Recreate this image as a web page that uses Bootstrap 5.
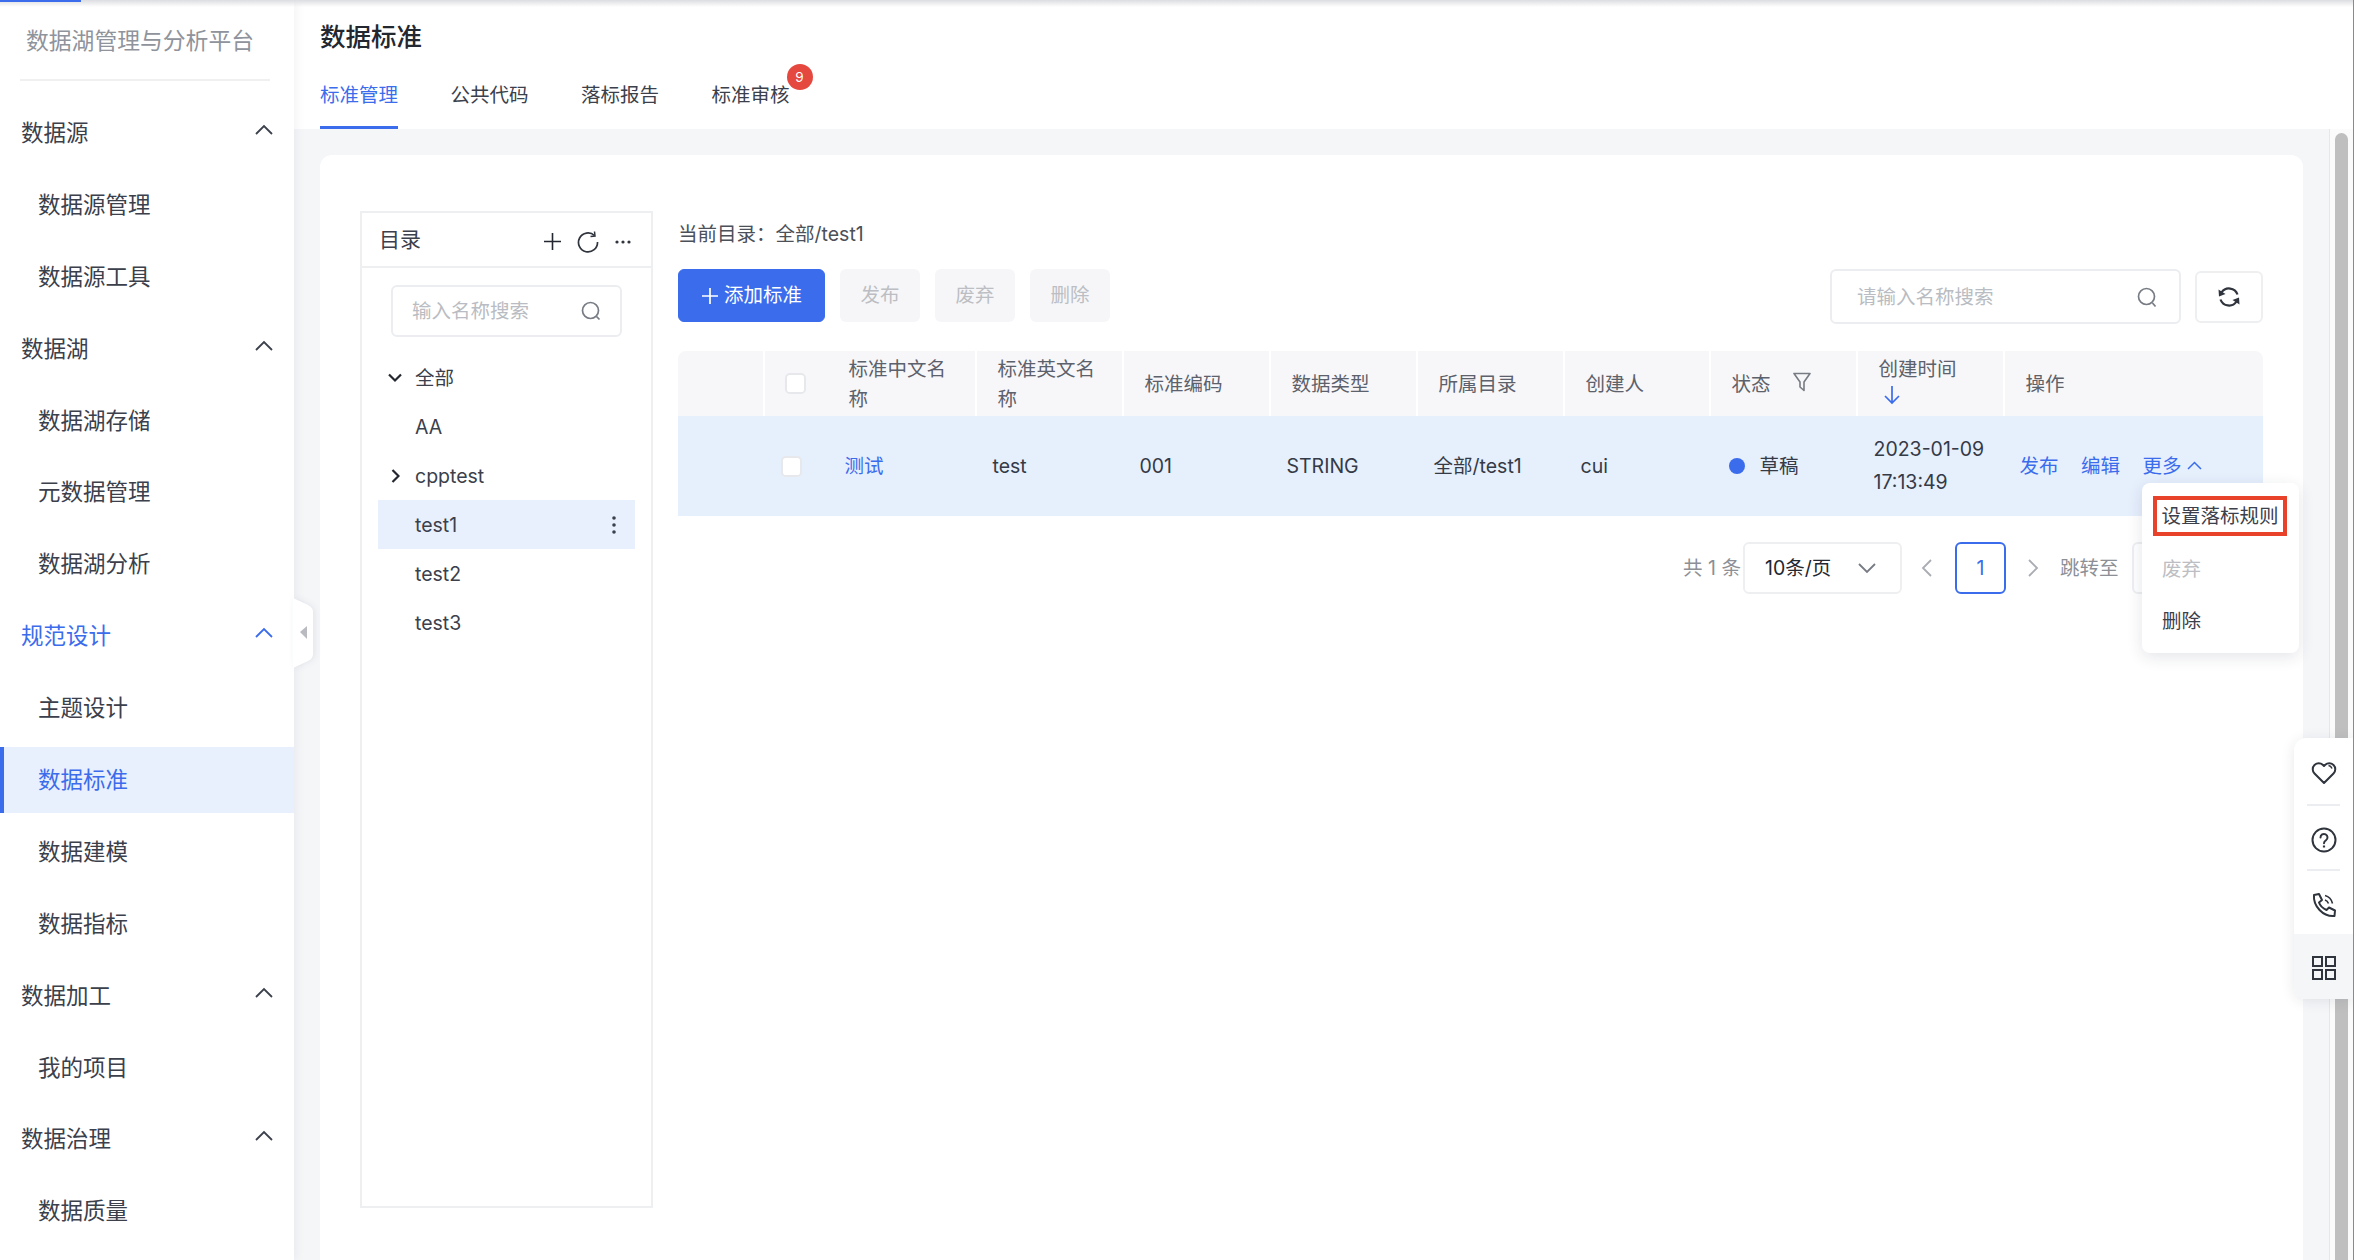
<!DOCTYPE html>
<html lang="zh-CN">
<head>
<meta charset="utf-8">
<title>数据标准</title>
<link rel="stylesheet" href="https://cdn.jsdelivr.net/npm/bootstrap@5.3.0/dist/css/bootstrap.min.css">
<style>
html,body{height:100%;overflow:hidden}
body{font-family:Inter,"Noto Sans CJK SC",sans-serif;font-size:19.5px;line-height:30px;color:#343a46;background:#fff;width:2354px;height:1260px;position:relative}
.load-strip{position:absolute;left:0;top:0;width:100%;height:7px;background:linear-gradient(#dcdde0,rgba(235,236,240,0));z-index:30}
.load-bar{position:absolute;left:0;top:0;width:81px;height:2px;background:#3b6cec;z-index:31}
.edge-line{position:absolute;right:0;top:0;width:1px;height:100%;background:#8a8a8a;z-index:32}
.side-rail{width:294px;height:1260px;flex:none;background:#fff;box-shadow:2px 0 10px rgba(30,40,70,.06);position:relative;z-index:5;overflow:hidden}
.side-logo{margin:0 24px 0 20px;padding-left:6px;height:81px;border-bottom:2px solid #eff0f2;font-size:22.8px;line-height:82px;color:#8f939b;white-space:nowrap}
.side-menu{margin-top:16px}
.side-item{height:71.9px;display:flex;align-items:center;font-size:22.5px;color:#3b404b;padding-left:21px;position:relative}
.side-sub{padding-left:38px;margin-bottom:0}
.side-item svg{position:absolute;left:255px;top:27px}
.side-open{color:#3b6cec}
.side-active{color:#3b6cec;background:#e9f0fd;border-left:4px solid #3b6cec;padding-left:34px;height:66px;margin:3px 0 2.9px}
.collapse-tab{position:absolute;left:293px;top:598px;z-index:6;filter:drop-shadow(2px 0 3px rgba(30,40,70,.08))}
.page-head{height:129px;background:#fff;padding:19px 0 0 26px;position:relative;z-index:2}
.page-title{font-size:25.5px;line-height:36px;font-weight:500;color:#23272f;margin:0 0 6px}
.tab-strip{gap:52.5px}
.tab-strip .nav-link{padding:19px 0 16px;border-bottom:3px solid transparent;color:#3b404b;font-size:19.5px;line-height:30px;position:relative}
.tab-strip .nav-link.tab-on{color:#3b6cec;border-bottom-color:#3b6cec}
.tab-count{position:absolute;left:75px;top:3px;width:26px;height:26px;padding:0;font-size:13.5px;line-height:26px;font-weight:400;background:#e5483f;color:#fff}
.work-area{height:1131px;background:#f5f6f8;overflow:hidden}
.sheet{margin:26px 26px 0;width:1983px;height:1200px;background:#fff;border-radius:12px;padding:56px 40px 0}
.dir-panel{width:293px;height:997px;flex:none;border:2px solid #eeeff1;margin-right:25px}
.dir-head{height:55px;border-bottom:2px solid #eeeff1;padding:0 20px 0 17px;display:flex;align-items:center;font-size:21px;color:#3b404b}
.dir-tools{gap:16px;margin-top:4px}
.dir-search{margin:17px 29px 16px;height:52px;border:2px solid #ebedf0;border-radius:6px;display:flex;align-items:center;padding:0 18px 0 19px}
.bare-input{border:0;outline:0;background:transparent;padding:0;min-width:0;flex:1;font-size:19.5px;color:#333;font-family:inherit}
.bare-input::placeholder{color:#b9bcc2;opacity:1}
.tree-list{margin:0 16px}
.tree-row{height:49px;display:flex;align-items:center;padding-left:37px;position:relative;color:#3b404b}
.tree-row svg{position:absolute}
.tree-on{background:#e9f0fd}
.path-line{margin-top:8px;color:#4b5059;line-height:30px;margin-bottom:20px}
.tool-gap{gap:15px}
.add-btn{--bs-btn-bg:#3b6cec;--bs-btn-border-color:#3b6cec;width:147px;height:53px;padding:0;font-size:19.5px;border-radius:6px;display:flex;align-items:center;justify-content:center;gap:5px}
.off-btn{width:80px;height:53px;padding:0;font-size:19.5px;border-radius:6px;background:#f6f6f8;border:0;color:#bcbec3}
.off-btn:disabled{background:#f6f6f8;color:#bcbec3;opacity:1}
.grid-search{width:351px;height:55px;border:2px solid #ebedf0;border-radius:6px;display:flex;align-items:center;padding:0 21px 0 25px}
.grid-reload{width:68px;height:52px;margin-top:2px;padding:0;border:2px solid #eeeff1;border-radius:6px;background:#fff;margin-left:14px;display:flex;align-items:center;justify-content:center}
.std-table{--bs-table-bg:transparent;table-layout:fixed;width:1585px;margin:27px 0 26px;color:#343a46}
.std-table>:not(caption)>*>*{border-bottom:0;padding:0 0 0 16.5px;vertical-align:middle;box-shadow:none}
.std-table th{background:#f7f7f9;height:65px;font-weight:400;color:#5c616b;padding:0 24px 0 20.5px;border-right:2px solid #fff;position:relative}
.std-table th:first-child{border-top-left-radius:8px}
.std-table th:last-child{border-top-right-radius:8px;border-right:0}
.std-table td{background:#e6effc;height:100px}
.std-table td a,.pub-links a{color:#3b6cec;text-decoration:none}
.cw-a{width:86px}.cw-b{width:64px}.cw-c{width:148px}.cw-d{width:147px}.cw-e{width:146px}.cw-f{width:259px}
.std-table th.chk-head{border-right:0;padding-left:20px}
.std-table td.chk-cell{padding-left:17px}
.chk-box{width:21px;height:21px;margin:0;border:2px solid #e7e8eb;border-radius:3px;display:block;float:none}
.sort-arrow{display:block;margin:1px 0 9px 4px}
.filter-mark{margin:0 0 4px 22px;flex:none}
.status-dot{width:16px;height:16px;border-radius:50%;background:#3b6cec;display:inline-block;margin:0 15px 0 2px}
.pub-links{gap:22.5px;margin-left:-1px}
.more-link{gap:5px}
.pager{color:#8c8f96;height:52px}
.pg-size{width:159px;height:52px;border:2px solid #eeeff1;border-radius:6px;display:flex;align-items:center;justify-content:space-between;padding:0 24px 0 20px;color:#23272f;margin-left:2px}
.pg-prev{margin-left:19px}
.pg-now{width:51px;height:52px;border:2px solid #3b6cec;border-radius:6px;color:#3b6cec;display:flex;align-items:center;justify-content:center;margin:0 21px 0 22px}
.pg-label{margin-left:21px}
.pg-jump{width:131px;height:52px;border:2px solid #eeeff1;border-radius:6px;margin-left:13.5px}
.more-menu{position:absolute;left:2142px;top:483px;width:157px;height:170px;background:#fff;border-radius:8px;box-shadow:0 4px 16px rgba(30,40,70,.12);z-index:10;padding:13px 0 0 11px}
.more-mark{width:134px;height:40px;border:4px solid #e8432a;display:flex;align-items:center;justify-content:center;color:#3b404b;white-space:nowrap;font-size:19.5px}
.more-line{height:52px;display:flex;align-items:center;padding-left:9px;color:#3b404b}
.more-first{margin-top:7px}
.more-off{color:#bcbec3}
.scroll-rail{width:25px;flex:none;height:1131px;background:#fbfbfb;border-left:1px solid #e6e7ea;padding:4px 0 0 5px}
.scroll-thumb{width:13px;height:100%;background:#bfbfbf;border-radius:6.5px 6.5px 0 0}
.float-tools{position:absolute;left:2294px;top:738px;width:59px;height:261px;background:#fff;border-radius:12px 0 0 12px;box-shadow:0 2px 14px rgba(30,40,70,.1);z-index:12;overflow:hidden}
.float-cell{height:65px;display:flex;align-items:center;justify-content:center;position:relative;padding-top:6px}
.float-cell:first-child{padding-top:4px;height:66px}
.float-cell+.float-cell::before{content:"";position:absolute;left:13px;right:13px;top:0;height:2px;background:#ebedf0}
.float-cell:last-child{height:65px;padding-top:3px;background:#f5f6f8}
.float-cell:last-child::before{display:none}
</style>
</head>
<body>
<div class="load-strip"></div>
<div class="load-bar"></div>
<div class="edge-line"></div>
<div class="d-flex">
  <aside class="side-rail">
    <div class="side-logo">数据湖管理与分析平台</div>
    <div class="side-menu">
      <div class="side-item">数据源<svg width="18" height="11" viewBox="0 0 18 11" fill="none" stroke="#3b404b" stroke-width="1.8"><path d="M1 10 9 2l8 8"/></svg></div>
      <div class="side-item side-sub">数据源管理</div>
      <div class="side-item side-sub">数据源工具</div>
      <div class="side-item">数据湖<svg width="18" height="11" viewBox="0 0 18 11" fill="none" stroke="#3b404b" stroke-width="1.8"><path d="M1 10 9 2l8 8"/></svg></div>
      <div class="side-item side-sub">数据湖存储</div>
      <div class="side-item side-sub">元数据管理</div>
      <div class="side-item side-sub">数据湖分析</div>
      <div class="side-item side-open">规范设计<svg width="18" height="11" viewBox="0 0 18 11" fill="none" stroke="#3b6cec" stroke-width="1.8"><path d="M1 10 9 2l8 8"/></svg></div>
      <div class="side-item side-sub">主题设计</div>
      <div class="side-item side-active">数据标准</div>
      <div class="side-item side-sub">数据建模</div>
      <div class="side-item side-sub">数据指标</div>
      <div class="side-item">数据加工<svg width="18" height="11" viewBox="0 0 18 11" fill="none" stroke="#3b404b" stroke-width="1.8"><path d="M1 10 9 2l8 8"/></svg></div>
      <div class="side-item side-sub">我的项目</div>
      <div class="side-item">数据治理<svg width="18" height="11" viewBox="0 0 18 11" fill="none" stroke="#3b404b" stroke-width="1.8"><path d="M1 10 9 2l8 8"/></svg></div>
      <div class="side-item side-sub">数据质量</div>
    </div>
  </aside>
  <svg class="collapse-tab" width="20" height="70" viewBox="0 0 20 70"><path d="M0 0 15 7q5 2.5 5 7v42q0 4.500-5 7L0 70z" fill="#fff"/><path d="M7 34 14 28v13z" fill="#b9bbc0"/></svg>
  <main class="flex-grow-1">
    <header class="page-head">
      <h1 class="page-title">数据标准</h1>
      <ul class="nav tab-strip">
        <li class="nav-item"><a class="nav-link tab-on" href="#">标准管理</a></li>
        <li class="nav-item"><a class="nav-link" href="#">公共代码</a></li>
        <li class="nav-item"><a class="nav-link" href="#">落标报告</a></li>
        <li class="nav-item"><a class="nav-link" href="#">标准审核<span class="badge rounded-pill tab-count">9</span></a></li>
      </ul>
    </header>
    <div class="d-flex">
      <div class="work-area flex-grow-1">
        <div class="sheet d-flex align-items-start">
          <section class="dir-panel">
            <div class="dir-head">
              <span class="me-auto">目录</span>
              <span class="d-flex align-items-center dir-tools">
                <svg width="17" height="17" viewBox="0 0 17 17" fill="none" stroke="#23272f" stroke-width="1.6"><path d="M8.500 0v17M0 8.500h17"/></svg>
                <svg width="22" height="22" viewBox="0 0 22 22" fill="none" stroke="#2f343d" stroke-width="1.7"><path d="M17.500 4.500A9.500 9.500 0 1 0 20.500 11"/><path d="M17.500.5l.5 4.500-4.500.5" stroke-width="1.500"/></svg>
                <svg width="16" height="4" viewBox="0 0 16 4" fill="#2f343d"><circle cx="2" cy="2" r="1.600"/><circle cx="8" cy="2" r="1.600"/><circle cx="14" cy="2" r="1.600"/></svg>
              </span>
            </div>
            <div class="dir-search">
              <input class="bare-input" placeholder="输入名称搜索">
              <svg width="22" height="22" viewBox="0 0 22 22" fill="none" stroke="#777b83" stroke-width="1.700"><circle cx="10.500" cy="10.500" r="8"/><path d="m16.500 16.500 3 3"/></svg>
            </div>
            <div class="tree-list">
              <div class="tree-row"><svg style="left:10px;top:20px" width="14" height="10" viewBox="0 0 14 10" fill="none" stroke="#23272f" stroke-width="2.200"><path d="m1 1.500 6 6 6-6"/></svg>全部</div>
              <div class="tree-row">AA</div>
              <div class="tree-row"><svg style="left:13px;top:18px" width="9" height="14" viewBox="0 0 9 14" fill="none" stroke="#23272f" stroke-width="2.200"><path d="m1.500 1 6 6-6 6"/></svg>cpptest</div>
              <div class="tree-row tree-on">test1<svg style="left:233px;top:15px" width="6" height="20" viewBox="0 0 6 20" fill="#3b404b"><circle cx="3" cy="3" r="1.800"/><circle cx="3" cy="10" r="1.800"/><circle cx="3" cy="17" r="1.800"/></svg></div>
              <div class="tree-row">test2</div>
              <div class="tree-row">test3</div>
            </div>
          </section>
          <section class="flex-grow-1">
            <div class="path-line">当前目录：全部/test1</div>
            <div class="d-flex align-items-start">
              <div class="d-flex tool-gap">
                <button class="btn btn-primary add-btn" type="button"><svg width="18" height="18" viewBox="0 0 18 18" fill="none" stroke="#fff" stroke-width="1.700"><path d="M9 1v16M1 9h16"/></svg>添加标准</button>
                <button class="btn off-btn" type="button" disabled>发布</button>
                <button class="btn off-btn" type="button" disabled>废弃</button>
                <button class="btn off-btn" type="button" disabled>删除</button>
              </div>
              <div class="grid-search ms-auto">
                <input class="bare-input" placeholder="请输入名称搜索">
                <svg width="22" height="24" viewBox="0 0 22 24" fill="none" stroke="#777b83" stroke-width="1.700"><circle cx="10.500" cy="11.500" r="8"/><path d="m16.500 18 3 3.500"/></svg>
              </div>
              <button class="grid-reload" type="button"><svg width="24" height="24" viewBox="0 0 24 24" fill="none" stroke="#2f343d" stroke-width="2.200"><path d="M20.500 9.500A9 9 0 0 0 4.500 7.500"/><path d="M1.500 4.500 8.500 9 2 11.500z" fill="#2f343d" stroke="none"/><path d="M3.500 14.500A9 9 0 0 0 19.500 16.500"/><path d="M22.500 19.500 15.500 15l6.500-2.500z" fill="#2f343d" stroke="none"/></svg></button>
            </div>
            <table class="table std-table">
              <colgroup><col class="cw-a"><col class="cw-b"><col class="cw-c"><col class="cw-d"><col class="cw-d"><col class="cw-d"><col class="cw-d"><col class="cw-e"><col class="cw-d"><col class="cw-d"><col class="cw-f"></colgroup>
              <thead>
                <tr>
                  <th></th>
                  <th class="chk-head"><input class="form-check-input chk-box" type="checkbox" aria-label="全选"></th>
                  <th>标准中文名称</th>
                  <th>标准英文名称</th>
                  <th>标准编码</th>
                  <th>数据类型</th>
                  <th>所属目录</th>
                  <th>创建人</th>
                  <th><span class="d-flex align-items-center">状态<svg class="filter-mark" width="18" height="20" viewBox="0 0 18 20" fill="none" stroke="#777b83" stroke-width="1.600" stroke-linejoin="round"><path d="M1 1.500h16L11 10v8.500L7 15v-5z"/></svg></span></th>
                  <th>创建时间<svg class="sort-arrow" width="18" height="20" viewBox="0 0 18 20" fill="none" stroke="#3b6cec" stroke-width="1.700"><path d="M9 1v17M2 11l7 7 7-7"/></svg></th>
                  <th>操作</th>
                </tr>
              </thead>
              <tbody>
                <tr>
                  <td></td>
                  <td class="chk-cell"><input class="form-check-input chk-box" type="checkbox" aria-label="选择"></td>
                  <td><a href="#">测试</a></td>
                  <td>test</td>
                  <td>001</td>
                  <td>STRING</td>
                  <td>全部/test1</td>
                  <td>cui</td>
                  <td><span class="d-flex align-items-center"><span class="status-dot"></span>草稿</span></td>
                  <td class="lh-lg"><span class="d-block" style="line-height:33px">2023-01-09</span><span class="d-block" style="line-height:33px">17:13:49</span></td>
                  <td><span class="d-flex pub-links align-items-center"><a href="#">发布</a><a href="#">编辑</a><a href="#" class="d-flex align-items-center more-link">更多<svg width="15" height="10" viewBox="0 0 15 10" fill="none" stroke="#3b6cec" stroke-width="1.500"><path d="M1 8l6.500-6.500L14 8"/></svg></a></span></td>
                </tr>
              </tbody>
            </table>
            <div class="d-flex justify-content-end align-items-center pager">
              <span>共 1 条</span>
              <div class="pg-size"><span>10条/页</span><svg width="18" height="11" viewBox="0 0 18 11" fill="none" stroke="#777b83" stroke-width="1.800"><path d="m1 1 8 8 8-8"/></svg></div>
              <svg class="pg-prev" width="12" height="20" viewBox="0 0 12 20" fill="none" stroke="#a9acb2" stroke-width="1.800"><path d="M10 2 2 10l8 8"/></svg>
              <div class="pg-now">1</div>
              <svg width="12" height="20" viewBox="0 0 12 20" fill="none" stroke="#a9acb2" stroke-width="1.800"><path d="m2 2 8 8-8 8"/></svg>
              <span class="pg-label">跳转至</span>
              <div class="pg-jump"></div>
            </div>
          </section>
        </div>
      </div>
      <div class="scroll-rail"><div class="scroll-thumb"></div></div>
    </div>
  </main>
</div>
<div class="more-menu">
  <div class="more-mark">设置落标规则</div>
  <div class="more-line more-off more-first">废弃</div>
  <div class="more-line">删除</div>
</div>
<div class="float-tools">
  <div class="float-cell"><svg width="26" height="26" viewBox="0 0 26 26" fill="none" stroke="#2f343d" stroke-width="2" stroke-linejoin="round"><path d="M13 23 3.500 13.500a6 6 0 0 1 0-8.500 6.200 6.200 0 0 1 8.500 0l1 1 1-1a6.200 6.200 0 0 1 8.500 0 6 6 0 0 1 0 8.500z"/><path d="M17.500 5.500q2.500.3 3.500 3" stroke-width="1.500"/></svg></div>
  <div class="float-cell"><svg width="26" height="26" viewBox="0 0 26 26" fill="none" stroke="#2f343d" stroke-width="2"><circle cx="13" cy="13" r="11.500"/><path d="M9.500 10.500a3.500 3.500 0 1 1 5.500 2.800c-1.300.9-2 1.500-2 2.900" stroke-linecap="round"/><path d="M13 18.500v2" stroke-width="2.200"/></svg></div>
  <div class="float-cell"><svg width="26" height="26" viewBox="0 0 26 26" fill="none" stroke="#2f343d" stroke-width="2" stroke-linejoin="round"><path d="M3 3 8 2l3 6-3 2.500c1 3 4 6 7.500 7.500L18 15.500l6 3-.5 5.500C12 25 2 14 3 3z"/><path d="M14 3.500q6 1.500 7.500 8M14 8q2.500.8 3.500 3.500" stroke-width="1.600"/></svg></div>
  <div class="float-cell"><svg width="24" height="24" viewBox="0 0 24 24" fill="none" stroke="#2f343d" stroke-width="2"><rect x="1" y="1" width="9" height="9"/><rect x="14" y="1" width="9" height="9"/><rect x="1" y="14" width="9" height="9"/><rect x="14" y="14" width="9" height="9"/></svg></div>
</div>
<script src="https://cdn.jsdelivr.net/npm/bootstrap@5.3.0/dist/js/bootstrap.bundle.min.js"></script>
</body>
</html>
